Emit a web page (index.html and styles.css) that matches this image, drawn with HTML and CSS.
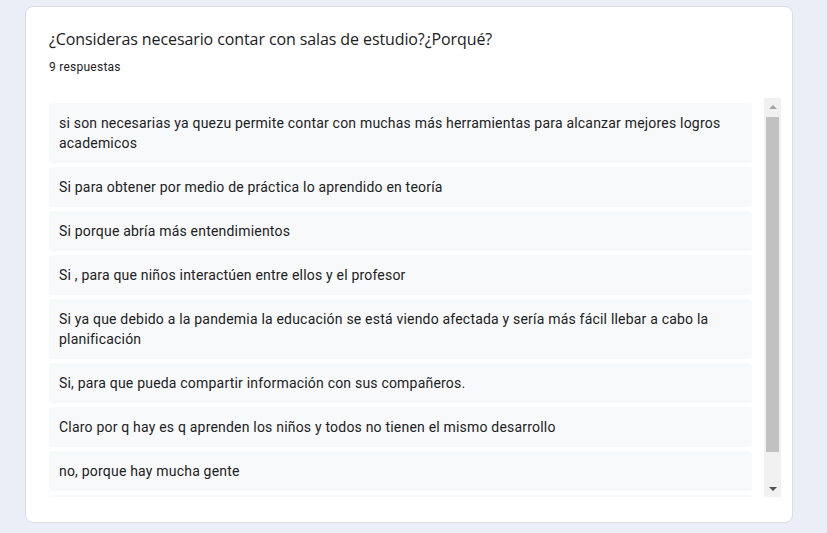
FILE: index.html
```html
<!DOCTYPE html>
<html lang="es">
<head>
<meta charset="utf-8">
<title>Respuestas</title>
<link rel="stylesheet" href="styles.css">
</head>
<body>
<div class="card">
  <h1 class="title">¿Consideras necesario contar con salas de estudio?¿Porqué?</h1>
  <div class="count">9 respuestas</div>
  <div class="list-wrap">
    <div class="list">
      <div class="item">si son necesarias ya quezu permite contar con muchas más herramientas para alcanzar mejores logros academicos</div>
      <div class="item">Si para obtener por medio de práctica lo aprendido en teoría</div>
      <div class="item">Si porque abría más entendimientos</div>
      <div class="item">Si , para que niños interactúen entre ellos y el profesor</div>
      <div class="item">Si ya que debido a la pandemia la educación se está viendo afectada y sería más fácil llebar a cabo la planificación</div>
      <div class="item">Si, para que pueda compartir información con sus compañeros.</div>
      <div class="item">Claro por q hay es q aprenden los niños y todos no tienen el mismo desarrollo</div>
      <div class="item">no, porque hay mucha gente</div>
      <div class="item item-empty"></div>
    </div>
    <div class="scrollbar">
      <div class="sb-btn"><span class="arrow-up"></span></div>
      <div class="sb-track"><div class="sb-thumb"></div></div>
      <div class="sb-btn"><span class="arrow-down"></span></div>
    </div>
  </div>
</div>
</body>
</html>
```
FILE: styles.css
```css
html, body {
  margin: 0;
  padding: 0;
}
body {
  background: #ebedf7;
  font-family: Roboto, "Liberation Sans", Arial, sans-serif;
  color: #202124;
  padding: 6px 0 0 25px;
  height: 533px;
  box-sizing: border-box;
  overflow: hidden;
}
.card {
  width: 768px;
  height: 517px;
  box-sizing: border-box;
  background: #fff;
  border: 1px solid #dadce0;
  border-radius: 8px;
  padding: 20px 11px 24px 23px;
  display: flex;
  flex-direction: column;
}
.title {
  margin: 0;
  font-family: "Open Sans", Roboto, sans-serif;
  font-weight: 400;
  font-size: 16px;
  line-height: 24px;
  letter-spacing: -0.1px;
  color: #202124;
}
.count {
  font-size: 12px;
  line-height: 16px;
  letter-spacing: 0.25px;
  margin-top: 8px;
  color: #202124;
}
.list-wrap {
  margin-top: 23px;
  display: flex;
  gap: 12px;
  height: 399px;
}
.list {
  flex: 1;
  overflow: hidden;
  padding-top: 5px;
  display: flex;
  flex-direction: column;
  gap: 4px;
}
.item {
  flex: none;
  background: #f8f9fa;
  border-radius: 4px;
  padding: 10px;
  font-size: 14px;
  line-height: 20px;
  letter-spacing: 0.2px;
  color: #202124;
}
.item-empty {
  height: 20px;
}
.scrollbar {
  width: 17px;
  flex: none;
  background: #f1f1f1;
  display: flex;
  flex-direction: column;
}
.sb-btn {
  height: 17px;
  flex: none;
  display: flex;
  align-items: center;
  justify-content: center;
}
.arrow-up {
  width: 0;
  height: 0;
  border-left: 4px solid transparent;
  border-right: 4px solid transparent;
  border-bottom: 4px solid #a3a3a3;
}
.arrow-down {
  width: 0;
  height: 0;
  border-left: 4px solid transparent;
  border-right: 4px solid transparent;
  border-top: 4px solid #505050;
}
.sb-track {
  flex: 1;
  padding: 2px 2px 0;
}
.sb-thumb {
  height: 335px;
  background: #c1c1c1;
}
```
